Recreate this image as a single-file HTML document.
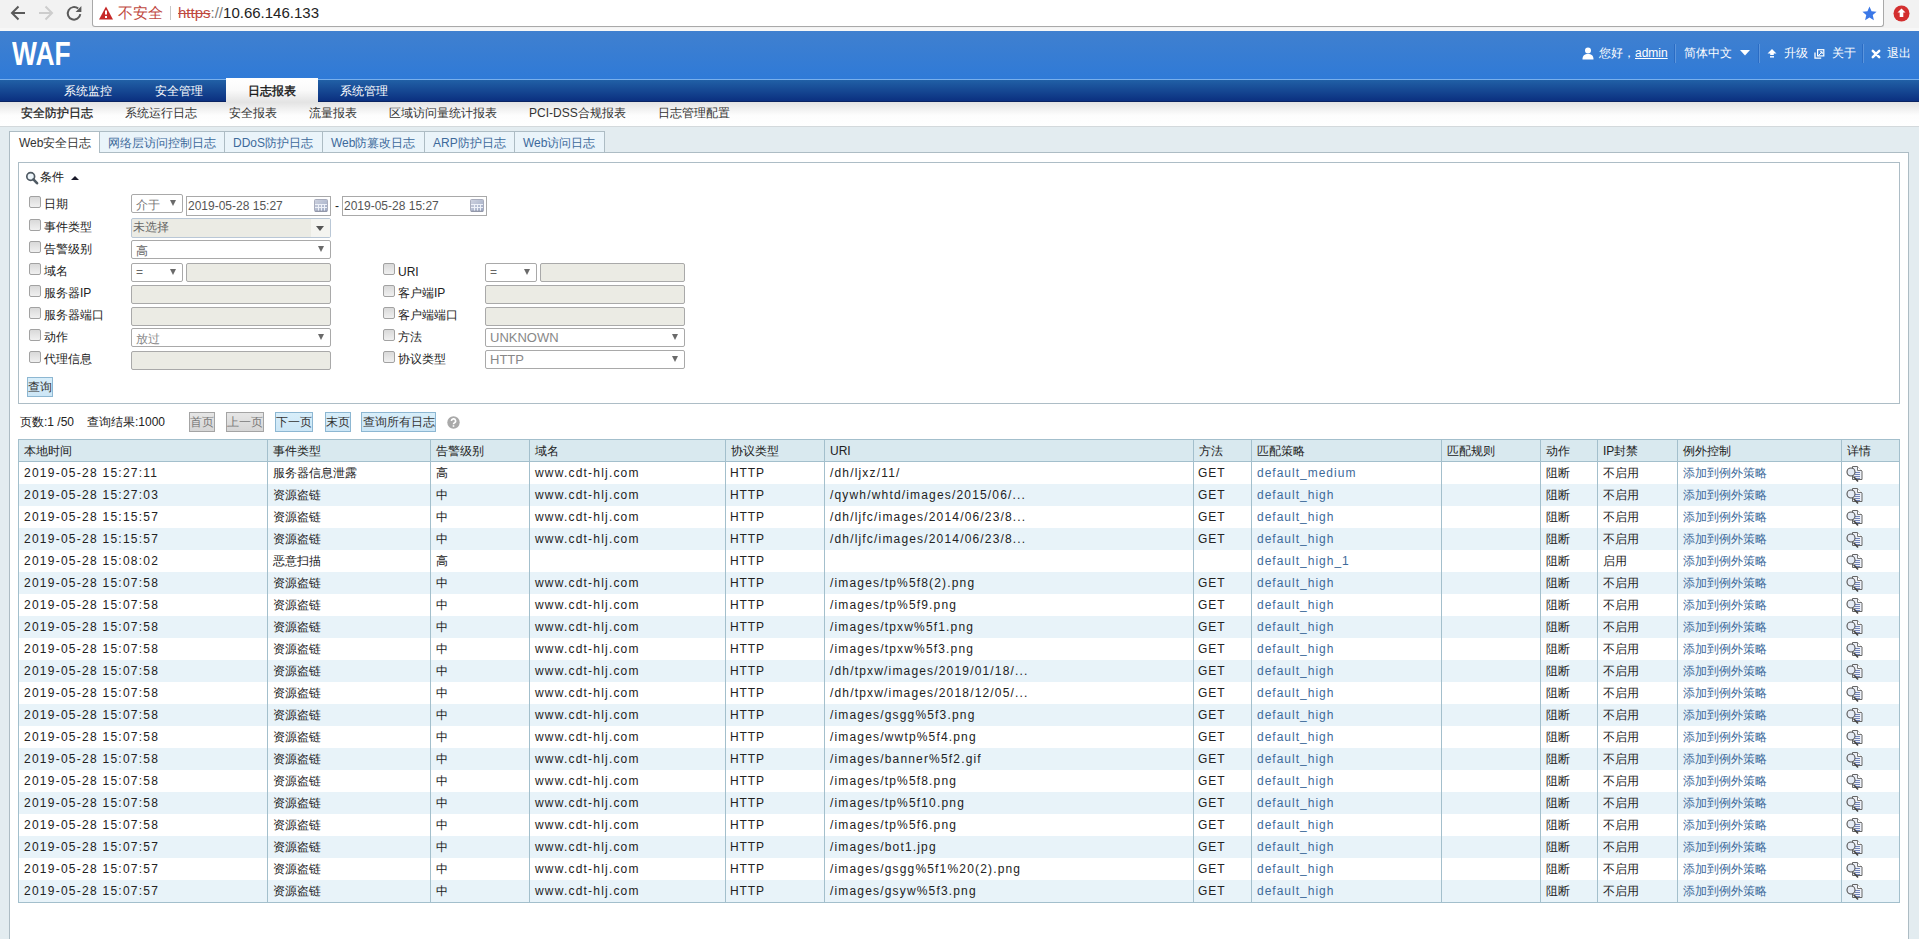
<!DOCTYPE html>
<html><head><meta charset="utf-8"><style>
*{box-sizing:border-box;margin:0;padding:0}
html,body{width:1919px;height:939px;overflow:hidden;background:#e3ecf0;font-family:"Liberation Sans",sans-serif;font-size:12px;color:#222}
.a{position:absolute;white-space:nowrap}
#chrome{position:absolute;left:0;top:0;width:1919px;height:31px;background:#f2f2f2}
#cl{position:absolute;left:0;top:28px;width:1919px;height:3px;background:#f7f7f7}
#addr{position:absolute;left:92px;top:-2px;width:1792px;height:29px;background:#fff;border:1px solid #a9a9a9;border-top:none;border-radius:0 0 3px 3px}
#hdr{position:absolute;left:0;top:31px;width:1919px;height:48px;background:linear-gradient(#4080cf,#2f7ad7)}
#hline{position:absolute;left:0;top:79px;width:1919px;height:1px;background:#79b0ec}
#nav{position:absolute;left:0;top:80px;width:1919px;height:22px;background:linear-gradient(#2160a6,#0b3080);border-bottom:1px solid #0a2462}
#sub{position:absolute;left:0;top:102px;width:1919px;height:25px;background:linear-gradient(#e3e3e3,#fdfdfd 55%,#fff);border-bottom:1px solid #d3d9dc}
.nv{position:absolute;top:83px;color:#fff;font-size:12px;line-height:17px}
.sv{position:absolute;top:105px;color:#333;font-size:12px;line-height:17px}
#act{position:absolute;left:226px;top:78px;width:92px;height:24px;background:linear-gradient(#fff,#fafafa 50%,#e4e4e4)}
#panel{position:absolute;left:9px;top:152px;width:1900px;height:800px;background:#fff;border:1px solid #adbcc4}
.tab{position:absolute;top:131px;height:22px;background:#eaf4fa;border:1px solid #adbcc4;border-right:none;color:#3d6a9a;line-height:22px}
.tab.on{background:#fff;color:#333;border-bottom-color:#fff;height:22px}

#cond{position:absolute;left:18px;top:162px;width:1882px;height:242px;border:1px solid #adbdc6;background:#fff}
.cb{position:absolute;width:12px;height:12px;border:1px solid #a2a2a2;border-radius:2px;background:linear-gradient(#d9d9d9,#f0f0f0)}
.lb{position:absolute;color:#222;line-height:16px;white-space:nowrap}
.sel{position:absolute;height:19px;border:1px solid #a9a9a9;background:#fff;color:#777;line-height:17px;padding-left:4px;border-radius:2px;white-space:nowrap}
.inp{position:absolute;height:19px;border:1px solid #a9a9a9;background:#ebebe4;border-radius:2px}
.arr{position:absolute;width:0;height:0;border-left:4px solid transparent;border-right:4px solid transparent;border-top:7px solid #444}
.sel span{color:inherit}
.btn{position:absolute;height:20px;border:1px solid #8db7d2;background:linear-gradient(#d8eefa,#cce6f6);color:#333;line-height:18px;text-align:center;white-space:nowrap}
.btn.g{border-color:#a4a4a4;background:linear-gradient(#e6e6e6,#d6d6d6);color:#7a7a7a}

#tbl{position:absolute;left:18px;top:439px;width:1882px;height:464px;border:1px solid #a3bfcc;background:#fff;overflow:hidden}
.th{position:absolute;left:0;top:0;width:1880px;height:22px;background:#d9e9ef;border-bottom:1px solid #a3bfcc}
.row{position:absolute;left:0;width:1880px;height:22px}
.row.o{background:#e8f3f9}
.vl{position:absolute;top:0;width:1px;height:464px;background:#a3bfcc}
.c{position:absolute;line-height:16px;white-space:nowrap;color:#222}
.v{letter-spacing:0.92px}
.lk{color:#3d6a9a}
</style></head><body>
<div id="chrome"></div><div id="cl"></div><div id="addr"></div>
<svg class="a" style="left:8px;top:3px" width="20" height="20" viewBox="0 0 20 20"><path d="M17 10H4.5M10.5 3.5L4 10l6.5 6.5" stroke="#5a5a5a" stroke-width="2" fill="none"/></svg>
<svg class="a" style="left:36px;top:3px" width="20" height="20" viewBox="0 0 20 20"><path d="M3 10h12.5M9.5 3.5L16 10l-6.5 6.5" stroke="#cdcdcd" stroke-width="2" fill="none"/></svg>
<svg class="a" style="left:65px;top:4px" width="20" height="20" viewBox="0 0 20 20"><path d="M15.3 10.2A6.3 6.3 0 1 1 13.2 4.6" stroke="#5a5a5a" stroke-width="2" fill="none"/><path d="M10.6 7.9H16.4V2.1Z" fill="#5a5a5a"/></svg>
<svg class="a" style="left:98px;top:5px" width="16" height="16" viewBox="0 0 16 16"><path d="M8 1.5L15 14.5H1z" fill="#c62828"/><rect x="7" y="5.5" width="2" height="4" fill="#fff"/><rect x="7" y="11" width="2" height="2" fill="#fff"/></svg>
<div class="a" style="left:118px;top:4px;font-size:15px;line-height:18px;color:#c0493f">不安全</div>
<div class="a" style="left:170px;top:6px;width:1px;height:14px;background:#c8c8c8"></div>
<div class="a" style="left:178px;top:3px;font-size:15px;line-height:19px;color:#222"><span style="color:#c0493f;text-decoration:line-through">https</span><span style="color:#777">://</span>10.66.146.133</div>
<svg class="a" style="left:1861px;top:5px" width="17" height="17" viewBox="0 0 24 24"><path d="M12 2l2.9 6.9 7.1.6-5.4 4.7 1.6 7.3L12 17.6 5.8 21.5l1.6-7.3L2 9.5l7.1-.6z" fill="#3b78e7"/></svg>
<svg class="a" style="left:1893px;top:5px" width="17" height="17" viewBox="0 0 17 17"><circle cx="8.5" cy="8.5" r="8" fill="#d32f2f"/><path d="M8.5 3.5l4 4h-2.2v4.5H6.7V7.5H4.5z" fill="#fff"/></svg>
<div id="hdr"></div><div id="hline"></div><div id="nav"></div><div id="sub"></div>
<div class="a" style="left:12px;top:36px;font-size:33px;line-height:36px;font-weight:bold;color:#fff;transform:scaleX(0.80);transform-origin:0 0">WAF</div>
<div id="act"></div>
<div class="nv" style="left:64px">系统监控</div>
<div class="nv" style="left:155px">安全管理</div>
<div class="nv" style="left:340px">系统管理</div>
<div class="nv" style="left:248px;color:#111;font-weight:500;-webkit-text-stroke:0.35px #111">日志报表</div>
<div class="sv" style="left:21px;font-weight:500;color:#1a1a1a;-webkit-text-stroke:0.25px #1a1a1a">安全防护日志</div>
<div class="sv" style="left:125px;">系统运行日志</div>
<div class="sv" style="left:229px;">安全报表</div>
<div class="sv" style="left:309px;">流量报表</div>
<div class="sv" style="left:389px;">区域访问量统计报表</div>
<div class="sv" style="left:529px;">PCI-DSS合规报表</div>
<div class="sv" style="left:658px;">日志管理配置</div>
<svg class="a" style="left:1582px;top:47px" width="12" height="13" viewBox="0 0 12 13"><circle cx="6" cy="3.5" r="3" fill="#fff"/><path d="M0.5 12.5c0-4 2-5.5 5.5-5.5s5.5 1.5 5.5 5.5z" fill="#fff"/></svg>
<div class="a" style="left:1599px;top:45px;color:#fff;line-height:17px">您好，<span style="text-decoration:underline">admin</span></div>
<div class="a" style="left:1674px;top:44px;width:1px;height:19px;background:#2a6cc4;box-shadow:1px 0 0 #5c95dc"></div>
<div class="a" style="left:1684px;top:45px;color:#fff;line-height:17px">简体中文</div>
<svg class="a" style="left:1740px;top:50px" width="10" height="6" viewBox="0 0 10 6"><path d="M0 0h10L5 5.5z" fill="#fff"/></svg>
<div class="a" style="left:1758px;top:44px;width:1px;height:19px;background:#2a6cc4;box-shadow:1px 0 0 #5c95dc"></div>
<svg class="a" style="left:1767px;top:49px" width="10" height="9" viewBox="0 0 10 9"><path d="M5 0L9.5 4.6H6.8V6H3.2V4.6H0.5z" fill="#fff"/><rect x="3" y="7" width="4" height="1.6" fill="#e8f0ff"/></svg>
<div class="a" style="left:1784px;top:45px;color:#fff;line-height:17px">升级</div>
<svg class="a" style="left:1814px;top:49px" width="11" height="10" viewBox="0 0 11 10"><path d="M1 3.5V9.2H7.2" stroke="#fff" stroke-width="1.3" fill="none"/><rect x="3.6" y="0.7" width="6.2" height="6.2" fill="none" stroke="#fff" stroke-width="1.2"/><path d="M4.5 6.5L8 3M6 2.8H8.2V5" stroke="#fff" stroke-width="1" fill="none"/></svg>
<div class="a" style="left:1832px;top:45px;color:#fff;line-height:17px">关于</div>
<div class="a" style="left:1862px;top:44px;width:1px;height:19px;background:#2a6cc4;box-shadow:1px 0 0 #5c95dc"></div>
<svg class="a" style="left:1871px;top:49px" width="10" height="10" viewBox="0 0 10 10"><path d="M1.8 1.8l6.4 6.4M8.2 1.8L1.8 8.2" stroke="#fff" stroke-width="2.5" stroke-linecap="round"/></svg>
<div class="a" style="left:1887px;top:45px;color:#fff;line-height:17px">退出</div>
<div id="panel"></div>
<div class="tab on" style="left:9px;width:91px;padding-left:9px">Web安全日志</div>
<div class="tab" style="left:99px;width:126px;padding-left:8px">网络层访问控制日志</div>
<div class="tab" style="left:224px;width:99px;padding-left:8px">DDoS防护日志</div>
<div class="tab" style="left:322px;width:103px;padding-left:8px">Web防篡改日志</div>
<div class="tab" style="left:424px;width:91px;padding-left:8px">ARP防护日志</div>
<div class="tab" style="left:514px;width:91px;border-right:1px solid #adbcc4;padding-left:8px">Web访问日志</div>
<div id="cond"></div>
<svg class="a" style="left:25px;top:171px" width="14" height="14" viewBox="0 0 14 14"><circle cx="5.7" cy="5.5" r="3.9" stroke="#4f5a63" stroke-width="1.7" fill="#eef6fb"/><path d="M8.4 8.4l3.6 3.8" stroke="#4f5a63" stroke-width="2.6" stroke-linecap="round"/></svg>
<div class="lb" style="left:40px;top:169px">条件</div>
<div class="arr" style="left:71px;top:176px;border-top:none;border-bottom:4px solid #1a1a2a;border-left-width:4px;border-right-width:4px"></div>
<div class="cb" style="left:29px;top:196px"></div>
<div class="lb" style="left:44px;top:196px">日期</div>
<div class="sel" style="left:131px;top:194px;width:52px;height:19px;color:#777"><span style="position:relative;top:2px">介于</span></div>
<div class="arr" style="left:170px;top:200px;border-top-color:#6a6a6a;border-top-width:6px;border-left-width:3.5px;border-right-width:3.5px"></div>
<div class="sel" style="left:186px;top:196px;width:145px;height:20px;color:#555;border-radius:0;padding-left:1px;line-height:18px">2019-05-28 15:27</div>
<svg class="a" style="left:314px;top:199px" width="14" height="13" viewBox="0 0 14 13"><defs><linearGradient id="cg186" x1="0" y1="0" x2="1" y2="1"><stop offset="0" stop-color="#cfd3e0"/><stop offset="1" stop-color="#9eaac4"/></linearGradient></defs><rect x="0.5" y="0.5" width="13" height="12" rx="1" fill="url(#cg186)" stroke="#a9adbd"/><path d="M1 5.5h12M1 8.5h12M4.5 5v7M7.5 5v7M10.5 5v7" stroke="#eef1f8" stroke-width="1"/><path d="M1 12.2h12" stroke="#8a8fa0"/></svg>
<div class="sel" style="left:342px;top:196px;width:145px;height:20px;color:#555;border-radius:0;padding-left:1px;line-height:18px">2019-05-28 15:27</div>
<svg class="a" style="left:470px;top:199px" width="14" height="13" viewBox="0 0 14 13"><defs><linearGradient id="cg342" x1="0" y1="0" x2="1" y2="1"><stop offset="0" stop-color="#cfd3e0"/><stop offset="1" stop-color="#9eaac4"/></linearGradient></defs><rect x="0.5" y="0.5" width="13" height="12" rx="1" fill="url(#cg342)" stroke="#a9adbd"/><path d="M1 5.5h12M1 8.5h12M4.5 5v7M7.5 5v7M10.5 5v7" stroke="#eef1f8" stroke-width="1"/><path d="M1 12.2h12" stroke="#8a8fa0"/></svg>
<div class="lb" style="left:335px;top:198px">-</div>
<div class="cb" style="left:29px;top:219px"></div>
<div class="lb" style="left:44px;top:219px">事件类型</div>
<div class="sel" style="left:131px;top:218px;width:200px;height:20px;background:#ebebe4;border-color:#b9c7d6;color:#666;padding-left:1px">未选择</div>
<div class="a" style="left:311px;top:219px;width:19px;height:18px;background:#f4f4f0"></div>
<div class="arr" style="left:316px;top:226px;border-top:5px solid #555;border-left-width:4px;border-right-width:4px"></div>
<div class="cb" style="left:29px;top:241px"></div>
<div class="lb" style="left:44px;top:241px">告警级别</div>
<div class="sel" style="left:131px;top:240px;width:200px;height:19px;color:#666"><span style="position:relative;top:2px">高</span></div>
<div class="arr" style="left:318px;top:246px;border-top-color:#6a6a6a;border-top-width:6px;border-left-width:3.5px;border-right-width:3.5px"></div>
<div class="cb" style="left:29px;top:263px"></div>
<div class="lb" style="left:44px;top:263px">域名</div>
<div class="sel" style="left:131px;top:263px;width:52px;height:19px;color:#666">=</div>
<div class="arr" style="left:170px;top:269px;border-top-color:#6a6a6a;border-top-width:6px;border-left-width:3.5px;border-right-width:3.5px"></div>
<div class="inp" style="left:186px;top:263px;width:145px;height:19px"></div>
<div class="cb" style="left:29px;top:285px"></div>
<div class="lb" style="left:44px;top:285px">服务器IP</div>
<div class="inp" style="left:131px;top:285px;width:200px;height:19px"></div>
<div class="cb" style="left:29px;top:307px"></div>
<div class="lb" style="left:44px;top:307px">服务器端口</div>
<div class="inp" style="left:131px;top:307px;width:200px;height:19px"></div>
<div class="cb" style="left:29px;top:329px"></div>
<div class="lb" style="left:44px;top:329px">动作</div>
<div class="sel" style="left:131px;top:328px;width:200px;height:19px;color:#888"><span style="position:relative;top:2px">放过</span></div>
<div class="arr" style="left:318px;top:334px;border-top-color:#6a6a6a;border-top-width:6px;border-left-width:3.5px;border-right-width:3.5px"></div>
<div class="cb" style="left:29px;top:351px"></div>
<div class="lb" style="left:44px;top:351px">代理信息</div>
<div class="inp" style="left:131px;top:351px;width:200px;height:19px"></div>
<div class="cb" style="left:383px;top:263px"></div>
<div class="lb" style="left:398px;top:264px">URI</div>
<div class="sel" style="left:485px;top:263px;width:52px;height:19px;color:#666">=</div>
<div class="arr" style="left:524px;top:269px;border-top-color:#6a6a6a;border-top-width:6px;border-left-width:3.5px;border-right-width:3.5px"></div>
<div class="inp" style="left:540px;top:263px;width:145px;height:19px"></div>
<div class="cb" style="left:383px;top:285px"></div>
<div class="lb" style="left:398px;top:285px">客户端IP</div>
<div class="inp" style="left:485px;top:285px;width:200px;height:19px"></div>
<div class="cb" style="left:383px;top:307px"></div>
<div class="lb" style="left:398px;top:307px">客户端端口</div>
<div class="inp" style="left:485px;top:307px;width:200px;height:19px"></div>
<div class="cb" style="left:383px;top:329px"></div>
<div class="lb" style="left:398px;top:329px">方法</div>
<div class="sel" style="left:485px;top:328px;width:200px;height:19px;color:#888"><span style="font-size:13px">UNKNOWN</span></div>
<div class="arr" style="left:672px;top:334px;border-top-color:#6a6a6a;border-top-width:6px;border-left-width:3.5px;border-right-width:3.5px"></div>
<div class="cb" style="left:383px;top:351px"></div>
<div class="lb" style="left:398px;top:351px">协议类型</div>
<div class="sel" style="left:485px;top:350px;width:200px;height:19px;color:#888"><span style="font-size:13px">HTTP</span></div>
<div class="arr" style="left:672px;top:356px;border-top-color:#6a6a6a;border-top-width:6px;border-left-width:3.5px;border-right-width:3.5px"></div>
<div class="btn" style="left:27px;top:377px;width:26px;height:20px;line-height:18px">查询</div>
<div class="lb" style="left:20px;top:414px">页数:1 /50</div>
<div class="lb" style="left:87px;top:414px">查询结果:1000</div>
<div class="btn g" style="left:189px;top:412px;width:26px">首页</div>
<div class="btn g" style="left:226px;top:412px;width:38px">上一页</div>
<div class="btn" style="left:275px;top:412px;width:38px">下一页</div>
<div class="btn" style="left:325px;top:412px;width:26px">末页</div>
<div class="btn" style="left:361px;top:412px;width:75px">查询所有日志</div>
<svg class="a" style="left:447px;top:416px" width="13" height="13" viewBox="0 0 13 13"><circle cx="6.5" cy="6.5" r="6.2" fill="#a9a9a9"/><path d="M4.4 5a2.1 2.1 0 1 1 2.9 1.9c-.6.3-.8.6-.8 1.3" stroke="#fff" stroke-width="1.6" fill="none"/><rect x="5.7" y="9.2" width="1.6" height="1.6" fill="#fff"/></svg>
<div id="tbl">
<div class="th"></div>
<div class="row" style="top:22px"></div>
<div class="row o" style="top:44px"></div>
<div class="row" style="top:66px"></div>
<div class="row o" style="top:88px"></div>
<div class="row" style="top:110px"></div>
<div class="row o" style="top:132px"></div>
<div class="row" style="top:154px"></div>
<div class="row o" style="top:176px"></div>
<div class="row" style="top:198px"></div>
<div class="row o" style="top:220px"></div>
<div class="row" style="top:242px"></div>
<div class="row o" style="top:264px"></div>
<div class="row" style="top:286px"></div>
<div class="row o" style="top:308px"></div>
<div class="row" style="top:330px"></div>
<div class="row o" style="top:352px"></div>
<div class="row" style="top:374px"></div>
<div class="row o" style="top:396px"></div>
<div class="row" style="top:418px"></div>
<div class="row o" style="top:440px"></div>
<div class="vl" style="left:248px"></div>
<div class="vl" style="left:411px"></div>
<div class="vl" style="left:510px"></div>
<div class="vl" style="left:706px"></div>
<div class="vl" style="left:805px"></div>
<div class="vl" style="left:1174px"></div>
<div class="vl" style="left:1232px"></div>
<div class="vl" style="left:1422px"></div>
<div class="vl" style="left:1521px"></div>
<div class="vl" style="left:1578px"></div>
<div class="vl" style="left:1658px"></div>
<div class="vl" style="left:1822px"></div>
<div class="c" style="left:5px;top:3px">本地时间</div>
<div class="c" style="left:254px;top:3px">事件类型</div>
<div class="c" style="left:417px;top:3px">告警级别</div>
<div class="c" style="left:516px;top:3px">域名</div>
<div class="c" style="left:712px;top:3px">协议类型</div>
<div class="c" style="left:811px;top:3px">URI</div>
<div class="c" style="left:1180px;top:3px">方法</div>
<div class="c" style="left:1238px;top:3px">匹配策略</div>
<div class="c" style="left:1428px;top:3px">匹配规则</div>
<div class="c" style="left:1527px;top:3px">动作</div>
<div class="c" style="left:1584px;top:3px">IP封禁</div>
<div class="c" style="left:1664px;top:3px">例外控制</div>
<div class="c" style="left:1828px;top:3px">详情</div>
<div class="c" style="letter-spacing:1.25px;left:5px;top:25px">2019-05-28 15:27:11</div>
<div class="c" style="left:254px;top:25px">服务器信息泄露</div>
<div class="c" style="left:417px;top:25px">高</div>
<div class="c" style="letter-spacing:1.2px;left:516px;top:25px">www.cdt-hlj.com</div>
<div class="c" style="letter-spacing:0.92px;left:711px;top:25px">HTTP</div>
<div class="c" style="letter-spacing:1.17px;left:811px;top:25px">/dh/ljxz/11/</div>
<div class="c" style="letter-spacing:0.92px;left:1179px;top:25px">GET</div>
<div class="c lk" style="letter-spacing:1.0px;left:1238px;top:25px">default_medium</div>
<div class="c" style="left:1527px;top:25px">阻断</div>
<div class="c" style="left:1584px;top:25px">不启用</div>
<div class="c lk" style="left:1664px;top:25px">添加到例外策略</div>
<svg class="a" style="left:1827px;top:26px" width="17" height="17" viewBox="0 0 17 17"><path d="M6.5 0.5H11.5L16 5V13.5H6.5Z" fill="#eef1f8" stroke="#666"/><path d="M11.5 0.5V4.5H16" fill="#fff" stroke="#777"/><path d="M9 6.5h5M9 8.5h5M9 10.5h5M9 12.5h5" stroke="#7083b8"/><circle cx="5" cy="6" r="4" fill="#e6ecf5" stroke="#555" stroke-width="1.1"/><path d="M7.5 10.5L12 15.5" stroke="#444" stroke-width="1.6"/></svg>
<div class="c" style="letter-spacing:1.25px;left:5px;top:47px">2019-05-28 15:27:03</div>
<div class="c" style="left:254px;top:47px">资源盗链</div>
<div class="c" style="left:417px;top:47px">中</div>
<div class="c" style="letter-spacing:1.2px;left:516px;top:47px">www.cdt-hlj.com</div>
<div class="c" style="letter-spacing:0.92px;left:711px;top:47px">HTTP</div>
<div class="c" style="letter-spacing:1.17px;left:811px;top:47px">/qywh/whtd/images/2015/06/...</div>
<div class="c" style="letter-spacing:0.92px;left:1179px;top:47px">GET</div>
<div class="c lk" style="letter-spacing:1.0px;left:1238px;top:47px">default_high</div>
<div class="c" style="left:1527px;top:47px">阻断</div>
<div class="c" style="left:1584px;top:47px">不启用</div>
<div class="c lk" style="left:1664px;top:47px">添加到例外策略</div>
<svg class="a" style="left:1827px;top:48px" width="17" height="17" viewBox="0 0 17 17"><path d="M6.5 0.5H11.5L16 5V13.5H6.5Z" fill="#eef1f8" stroke="#666"/><path d="M11.5 0.5V4.5H16" fill="#fff" stroke="#777"/><path d="M9 6.5h5M9 8.5h5M9 10.5h5M9 12.5h5" stroke="#7083b8"/><circle cx="5" cy="6" r="4" fill="#e6ecf5" stroke="#555" stroke-width="1.1"/><path d="M7.5 10.5L12 15.5" stroke="#444" stroke-width="1.6"/></svg>
<div class="c" style="letter-spacing:1.25px;left:5px;top:69px">2019-05-28 15:15:57</div>
<div class="c" style="left:254px;top:69px">资源盗链</div>
<div class="c" style="left:417px;top:69px">中</div>
<div class="c" style="letter-spacing:1.2px;left:516px;top:69px">www.cdt-hlj.com</div>
<div class="c" style="letter-spacing:0.92px;left:711px;top:69px">HTTP</div>
<div class="c" style="letter-spacing:1.17px;left:811px;top:69px">/dh/ljfc/images/2014/06/23/8...</div>
<div class="c" style="letter-spacing:0.92px;left:1179px;top:69px">GET</div>
<div class="c lk" style="letter-spacing:1.0px;left:1238px;top:69px">default_high</div>
<div class="c" style="left:1527px;top:69px">阻断</div>
<div class="c" style="left:1584px;top:69px">不启用</div>
<div class="c lk" style="left:1664px;top:69px">添加到例外策略</div>
<svg class="a" style="left:1827px;top:70px" width="17" height="17" viewBox="0 0 17 17"><path d="M6.5 0.5H11.5L16 5V13.5H6.5Z" fill="#eef1f8" stroke="#666"/><path d="M11.5 0.5V4.5H16" fill="#fff" stroke="#777"/><path d="M9 6.5h5M9 8.5h5M9 10.5h5M9 12.5h5" stroke="#7083b8"/><circle cx="5" cy="6" r="4" fill="#e6ecf5" stroke="#555" stroke-width="1.1"/><path d="M7.5 10.5L12 15.5" stroke="#444" stroke-width="1.6"/></svg>
<div class="c" style="letter-spacing:1.25px;left:5px;top:91px">2019-05-28 15:15:57</div>
<div class="c" style="left:254px;top:91px">资源盗链</div>
<div class="c" style="left:417px;top:91px">中</div>
<div class="c" style="letter-spacing:1.2px;left:516px;top:91px">www.cdt-hlj.com</div>
<div class="c" style="letter-spacing:0.92px;left:711px;top:91px">HTTP</div>
<div class="c" style="letter-spacing:1.17px;left:811px;top:91px">/dh/ljfc/images/2014/06/23/8...</div>
<div class="c" style="letter-spacing:0.92px;left:1179px;top:91px">GET</div>
<div class="c lk" style="letter-spacing:1.0px;left:1238px;top:91px">default_high</div>
<div class="c" style="left:1527px;top:91px">阻断</div>
<div class="c" style="left:1584px;top:91px">不启用</div>
<div class="c lk" style="left:1664px;top:91px">添加到例外策略</div>
<svg class="a" style="left:1827px;top:92px" width="17" height="17" viewBox="0 0 17 17"><path d="M6.5 0.5H11.5L16 5V13.5H6.5Z" fill="#eef1f8" stroke="#666"/><path d="M11.5 0.5V4.5H16" fill="#fff" stroke="#777"/><path d="M9 6.5h5M9 8.5h5M9 10.5h5M9 12.5h5" stroke="#7083b8"/><circle cx="5" cy="6" r="4" fill="#e6ecf5" stroke="#555" stroke-width="1.1"/><path d="M7.5 10.5L12 15.5" stroke="#444" stroke-width="1.6"/></svg>
<div class="c" style="letter-spacing:1.25px;left:5px;top:113px">2019-05-28 15:08:02</div>
<div class="c" style="left:254px;top:113px">恶意扫描</div>
<div class="c" style="left:417px;top:113px">高</div>
<div class="c" style="letter-spacing:0.92px;left:711px;top:113px">HTTP</div>
<div class="c lk" style="letter-spacing:1.0px;left:1238px;top:113px">default_high_1</div>
<div class="c" style="left:1527px;top:113px">阻断</div>
<div class="c" style="left:1584px;top:113px">启用</div>
<div class="c lk" style="left:1664px;top:113px">添加到例外策略</div>
<svg class="a" style="left:1827px;top:114px" width="17" height="17" viewBox="0 0 17 17"><path d="M6.5 0.5H11.5L16 5V13.5H6.5Z" fill="#eef1f8" stroke="#666"/><path d="M11.5 0.5V4.5H16" fill="#fff" stroke="#777"/><path d="M9 6.5h5M9 8.5h5M9 10.5h5M9 12.5h5" stroke="#7083b8"/><circle cx="5" cy="6" r="4" fill="#e6ecf5" stroke="#555" stroke-width="1.1"/><path d="M7.5 10.5L12 15.5" stroke="#444" stroke-width="1.6"/></svg>
<div class="c" style="letter-spacing:1.25px;left:5px;top:135px">2019-05-28 15:07:58</div>
<div class="c" style="left:254px;top:135px">资源盗链</div>
<div class="c" style="left:417px;top:135px">中</div>
<div class="c" style="letter-spacing:1.2px;left:516px;top:135px">www.cdt-hlj.com</div>
<div class="c" style="letter-spacing:0.92px;left:711px;top:135px">HTTP</div>
<div class="c" style="letter-spacing:1.17px;left:811px;top:135px">/images/tp%5f8(2).png</div>
<div class="c" style="letter-spacing:0.92px;left:1179px;top:135px">GET</div>
<div class="c lk" style="letter-spacing:1.0px;left:1238px;top:135px">default_high</div>
<div class="c" style="left:1527px;top:135px">阻断</div>
<div class="c" style="left:1584px;top:135px">不启用</div>
<div class="c lk" style="left:1664px;top:135px">添加到例外策略</div>
<svg class="a" style="left:1827px;top:136px" width="17" height="17" viewBox="0 0 17 17"><path d="M6.5 0.5H11.5L16 5V13.5H6.5Z" fill="#eef1f8" stroke="#666"/><path d="M11.5 0.5V4.5H16" fill="#fff" stroke="#777"/><path d="M9 6.5h5M9 8.5h5M9 10.5h5M9 12.5h5" stroke="#7083b8"/><circle cx="5" cy="6" r="4" fill="#e6ecf5" stroke="#555" stroke-width="1.1"/><path d="M7.5 10.5L12 15.5" stroke="#444" stroke-width="1.6"/></svg>
<div class="c" style="letter-spacing:1.25px;left:5px;top:157px">2019-05-28 15:07:58</div>
<div class="c" style="left:254px;top:157px">资源盗链</div>
<div class="c" style="left:417px;top:157px">中</div>
<div class="c" style="letter-spacing:1.2px;left:516px;top:157px">www.cdt-hlj.com</div>
<div class="c" style="letter-spacing:0.92px;left:711px;top:157px">HTTP</div>
<div class="c" style="letter-spacing:1.17px;left:811px;top:157px">/images/tp%5f9.png</div>
<div class="c" style="letter-spacing:0.92px;left:1179px;top:157px">GET</div>
<div class="c lk" style="letter-spacing:1.0px;left:1238px;top:157px">default_high</div>
<div class="c" style="left:1527px;top:157px">阻断</div>
<div class="c" style="left:1584px;top:157px">不启用</div>
<div class="c lk" style="left:1664px;top:157px">添加到例外策略</div>
<svg class="a" style="left:1827px;top:158px" width="17" height="17" viewBox="0 0 17 17"><path d="M6.5 0.5H11.5L16 5V13.5H6.5Z" fill="#eef1f8" stroke="#666"/><path d="M11.5 0.5V4.5H16" fill="#fff" stroke="#777"/><path d="M9 6.5h5M9 8.5h5M9 10.5h5M9 12.5h5" stroke="#7083b8"/><circle cx="5" cy="6" r="4" fill="#e6ecf5" stroke="#555" stroke-width="1.1"/><path d="M7.5 10.5L12 15.5" stroke="#444" stroke-width="1.6"/></svg>
<div class="c" style="letter-spacing:1.25px;left:5px;top:179px">2019-05-28 15:07:58</div>
<div class="c" style="left:254px;top:179px">资源盗链</div>
<div class="c" style="left:417px;top:179px">中</div>
<div class="c" style="letter-spacing:1.2px;left:516px;top:179px">www.cdt-hlj.com</div>
<div class="c" style="letter-spacing:0.92px;left:711px;top:179px">HTTP</div>
<div class="c" style="letter-spacing:1.17px;left:811px;top:179px">/images/tpxw%5f1.png</div>
<div class="c" style="letter-spacing:0.92px;left:1179px;top:179px">GET</div>
<div class="c lk" style="letter-spacing:1.0px;left:1238px;top:179px">default_high</div>
<div class="c" style="left:1527px;top:179px">阻断</div>
<div class="c" style="left:1584px;top:179px">不启用</div>
<div class="c lk" style="left:1664px;top:179px">添加到例外策略</div>
<svg class="a" style="left:1827px;top:180px" width="17" height="17" viewBox="0 0 17 17"><path d="M6.5 0.5H11.5L16 5V13.5H6.5Z" fill="#eef1f8" stroke="#666"/><path d="M11.5 0.5V4.5H16" fill="#fff" stroke="#777"/><path d="M9 6.5h5M9 8.5h5M9 10.5h5M9 12.5h5" stroke="#7083b8"/><circle cx="5" cy="6" r="4" fill="#e6ecf5" stroke="#555" stroke-width="1.1"/><path d="M7.5 10.5L12 15.5" stroke="#444" stroke-width="1.6"/></svg>
<div class="c" style="letter-spacing:1.25px;left:5px;top:201px">2019-05-28 15:07:58</div>
<div class="c" style="left:254px;top:201px">资源盗链</div>
<div class="c" style="left:417px;top:201px">中</div>
<div class="c" style="letter-spacing:1.2px;left:516px;top:201px">www.cdt-hlj.com</div>
<div class="c" style="letter-spacing:0.92px;left:711px;top:201px">HTTP</div>
<div class="c" style="letter-spacing:1.17px;left:811px;top:201px">/images/tpxw%5f3.png</div>
<div class="c" style="letter-spacing:0.92px;left:1179px;top:201px">GET</div>
<div class="c lk" style="letter-spacing:1.0px;left:1238px;top:201px">default_high</div>
<div class="c" style="left:1527px;top:201px">阻断</div>
<div class="c" style="left:1584px;top:201px">不启用</div>
<div class="c lk" style="left:1664px;top:201px">添加到例外策略</div>
<svg class="a" style="left:1827px;top:202px" width="17" height="17" viewBox="0 0 17 17"><path d="M6.5 0.5H11.5L16 5V13.5H6.5Z" fill="#eef1f8" stroke="#666"/><path d="M11.5 0.5V4.5H16" fill="#fff" stroke="#777"/><path d="M9 6.5h5M9 8.5h5M9 10.5h5M9 12.5h5" stroke="#7083b8"/><circle cx="5" cy="6" r="4" fill="#e6ecf5" stroke="#555" stroke-width="1.1"/><path d="M7.5 10.5L12 15.5" stroke="#444" stroke-width="1.6"/></svg>
<div class="c" style="letter-spacing:1.25px;left:5px;top:223px">2019-05-28 15:07:58</div>
<div class="c" style="left:254px;top:223px">资源盗链</div>
<div class="c" style="left:417px;top:223px">中</div>
<div class="c" style="letter-spacing:1.2px;left:516px;top:223px">www.cdt-hlj.com</div>
<div class="c" style="letter-spacing:0.92px;left:711px;top:223px">HTTP</div>
<div class="c" style="letter-spacing:1.17px;left:811px;top:223px">/dh/tpxw/images/2019/01/18/...</div>
<div class="c" style="letter-spacing:0.92px;left:1179px;top:223px">GET</div>
<div class="c lk" style="letter-spacing:1.0px;left:1238px;top:223px">default_high</div>
<div class="c" style="left:1527px;top:223px">阻断</div>
<div class="c" style="left:1584px;top:223px">不启用</div>
<div class="c lk" style="left:1664px;top:223px">添加到例外策略</div>
<svg class="a" style="left:1827px;top:224px" width="17" height="17" viewBox="0 0 17 17"><path d="M6.5 0.5H11.5L16 5V13.5H6.5Z" fill="#eef1f8" stroke="#666"/><path d="M11.5 0.5V4.5H16" fill="#fff" stroke="#777"/><path d="M9 6.5h5M9 8.5h5M9 10.5h5M9 12.5h5" stroke="#7083b8"/><circle cx="5" cy="6" r="4" fill="#e6ecf5" stroke="#555" stroke-width="1.1"/><path d="M7.5 10.5L12 15.5" stroke="#444" stroke-width="1.6"/></svg>
<div class="c" style="letter-spacing:1.25px;left:5px;top:245px">2019-05-28 15:07:58</div>
<div class="c" style="left:254px;top:245px">资源盗链</div>
<div class="c" style="left:417px;top:245px">中</div>
<div class="c" style="letter-spacing:1.2px;left:516px;top:245px">www.cdt-hlj.com</div>
<div class="c" style="letter-spacing:0.92px;left:711px;top:245px">HTTP</div>
<div class="c" style="letter-spacing:1.17px;left:811px;top:245px">/dh/tpxw/images/2018/12/05/...</div>
<div class="c" style="letter-spacing:0.92px;left:1179px;top:245px">GET</div>
<div class="c lk" style="letter-spacing:1.0px;left:1238px;top:245px">default_high</div>
<div class="c" style="left:1527px;top:245px">阻断</div>
<div class="c" style="left:1584px;top:245px">不启用</div>
<div class="c lk" style="left:1664px;top:245px">添加到例外策略</div>
<svg class="a" style="left:1827px;top:246px" width="17" height="17" viewBox="0 0 17 17"><path d="M6.5 0.5H11.5L16 5V13.5H6.5Z" fill="#eef1f8" stroke="#666"/><path d="M11.5 0.5V4.5H16" fill="#fff" stroke="#777"/><path d="M9 6.5h5M9 8.5h5M9 10.5h5M9 12.5h5" stroke="#7083b8"/><circle cx="5" cy="6" r="4" fill="#e6ecf5" stroke="#555" stroke-width="1.1"/><path d="M7.5 10.5L12 15.5" stroke="#444" stroke-width="1.6"/></svg>
<div class="c" style="letter-spacing:1.25px;left:5px;top:267px">2019-05-28 15:07:58</div>
<div class="c" style="left:254px;top:267px">资源盗链</div>
<div class="c" style="left:417px;top:267px">中</div>
<div class="c" style="letter-spacing:1.2px;left:516px;top:267px">www.cdt-hlj.com</div>
<div class="c" style="letter-spacing:0.92px;left:711px;top:267px">HTTP</div>
<div class="c" style="letter-spacing:1.17px;left:811px;top:267px">/images/gsgg%5f3.png</div>
<div class="c" style="letter-spacing:0.92px;left:1179px;top:267px">GET</div>
<div class="c lk" style="letter-spacing:1.0px;left:1238px;top:267px">default_high</div>
<div class="c" style="left:1527px;top:267px">阻断</div>
<div class="c" style="left:1584px;top:267px">不启用</div>
<div class="c lk" style="left:1664px;top:267px">添加到例外策略</div>
<svg class="a" style="left:1827px;top:268px" width="17" height="17" viewBox="0 0 17 17"><path d="M6.5 0.5H11.5L16 5V13.5H6.5Z" fill="#eef1f8" stroke="#666"/><path d="M11.5 0.5V4.5H16" fill="#fff" stroke="#777"/><path d="M9 6.5h5M9 8.5h5M9 10.5h5M9 12.5h5" stroke="#7083b8"/><circle cx="5" cy="6" r="4" fill="#e6ecf5" stroke="#555" stroke-width="1.1"/><path d="M7.5 10.5L12 15.5" stroke="#444" stroke-width="1.6"/></svg>
<div class="c" style="letter-spacing:1.25px;left:5px;top:289px">2019-05-28 15:07:58</div>
<div class="c" style="left:254px;top:289px">资源盗链</div>
<div class="c" style="left:417px;top:289px">中</div>
<div class="c" style="letter-spacing:1.2px;left:516px;top:289px">www.cdt-hlj.com</div>
<div class="c" style="letter-spacing:0.92px;left:711px;top:289px">HTTP</div>
<div class="c" style="letter-spacing:1.17px;left:811px;top:289px">/images/wwtp%5f4.png</div>
<div class="c" style="letter-spacing:0.92px;left:1179px;top:289px">GET</div>
<div class="c lk" style="letter-spacing:1.0px;left:1238px;top:289px">default_high</div>
<div class="c" style="left:1527px;top:289px">阻断</div>
<div class="c" style="left:1584px;top:289px">不启用</div>
<div class="c lk" style="left:1664px;top:289px">添加到例外策略</div>
<svg class="a" style="left:1827px;top:290px" width="17" height="17" viewBox="0 0 17 17"><path d="M6.5 0.5H11.5L16 5V13.5H6.5Z" fill="#eef1f8" stroke="#666"/><path d="M11.5 0.5V4.5H16" fill="#fff" stroke="#777"/><path d="M9 6.5h5M9 8.5h5M9 10.5h5M9 12.5h5" stroke="#7083b8"/><circle cx="5" cy="6" r="4" fill="#e6ecf5" stroke="#555" stroke-width="1.1"/><path d="M7.5 10.5L12 15.5" stroke="#444" stroke-width="1.6"/></svg>
<div class="c" style="letter-spacing:1.25px;left:5px;top:311px">2019-05-28 15:07:58</div>
<div class="c" style="left:254px;top:311px">资源盗链</div>
<div class="c" style="left:417px;top:311px">中</div>
<div class="c" style="letter-spacing:1.2px;left:516px;top:311px">www.cdt-hlj.com</div>
<div class="c" style="letter-spacing:0.92px;left:711px;top:311px">HTTP</div>
<div class="c" style="letter-spacing:1.17px;left:811px;top:311px">/images/banner%5f2.gif</div>
<div class="c" style="letter-spacing:0.92px;left:1179px;top:311px">GET</div>
<div class="c lk" style="letter-spacing:1.0px;left:1238px;top:311px">default_high</div>
<div class="c" style="left:1527px;top:311px">阻断</div>
<div class="c" style="left:1584px;top:311px">不启用</div>
<div class="c lk" style="left:1664px;top:311px">添加到例外策略</div>
<svg class="a" style="left:1827px;top:312px" width="17" height="17" viewBox="0 0 17 17"><path d="M6.5 0.5H11.5L16 5V13.5H6.5Z" fill="#eef1f8" stroke="#666"/><path d="M11.5 0.5V4.5H16" fill="#fff" stroke="#777"/><path d="M9 6.5h5M9 8.5h5M9 10.5h5M9 12.5h5" stroke="#7083b8"/><circle cx="5" cy="6" r="4" fill="#e6ecf5" stroke="#555" stroke-width="1.1"/><path d="M7.5 10.5L12 15.5" stroke="#444" stroke-width="1.6"/></svg>
<div class="c" style="letter-spacing:1.25px;left:5px;top:333px">2019-05-28 15:07:58</div>
<div class="c" style="left:254px;top:333px">资源盗链</div>
<div class="c" style="left:417px;top:333px">中</div>
<div class="c" style="letter-spacing:1.2px;left:516px;top:333px">www.cdt-hlj.com</div>
<div class="c" style="letter-spacing:0.92px;left:711px;top:333px">HTTP</div>
<div class="c" style="letter-spacing:1.17px;left:811px;top:333px">/images/tp%5f8.png</div>
<div class="c" style="letter-spacing:0.92px;left:1179px;top:333px">GET</div>
<div class="c lk" style="letter-spacing:1.0px;left:1238px;top:333px">default_high</div>
<div class="c" style="left:1527px;top:333px">阻断</div>
<div class="c" style="left:1584px;top:333px">不启用</div>
<div class="c lk" style="left:1664px;top:333px">添加到例外策略</div>
<svg class="a" style="left:1827px;top:334px" width="17" height="17" viewBox="0 0 17 17"><path d="M6.5 0.5H11.5L16 5V13.5H6.5Z" fill="#eef1f8" stroke="#666"/><path d="M11.5 0.5V4.5H16" fill="#fff" stroke="#777"/><path d="M9 6.5h5M9 8.5h5M9 10.5h5M9 12.5h5" stroke="#7083b8"/><circle cx="5" cy="6" r="4" fill="#e6ecf5" stroke="#555" stroke-width="1.1"/><path d="M7.5 10.5L12 15.5" stroke="#444" stroke-width="1.6"/></svg>
<div class="c" style="letter-spacing:1.25px;left:5px;top:355px">2019-05-28 15:07:58</div>
<div class="c" style="left:254px;top:355px">资源盗链</div>
<div class="c" style="left:417px;top:355px">中</div>
<div class="c" style="letter-spacing:1.2px;left:516px;top:355px">www.cdt-hlj.com</div>
<div class="c" style="letter-spacing:0.92px;left:711px;top:355px">HTTP</div>
<div class="c" style="letter-spacing:1.17px;left:811px;top:355px">/images/tp%5f10.png</div>
<div class="c" style="letter-spacing:0.92px;left:1179px;top:355px">GET</div>
<div class="c lk" style="letter-spacing:1.0px;left:1238px;top:355px">default_high</div>
<div class="c" style="left:1527px;top:355px">阻断</div>
<div class="c" style="left:1584px;top:355px">不启用</div>
<div class="c lk" style="left:1664px;top:355px">添加到例外策略</div>
<svg class="a" style="left:1827px;top:356px" width="17" height="17" viewBox="0 0 17 17"><path d="M6.5 0.5H11.5L16 5V13.5H6.5Z" fill="#eef1f8" stroke="#666"/><path d="M11.5 0.5V4.5H16" fill="#fff" stroke="#777"/><path d="M9 6.5h5M9 8.5h5M9 10.5h5M9 12.5h5" stroke="#7083b8"/><circle cx="5" cy="6" r="4" fill="#e6ecf5" stroke="#555" stroke-width="1.1"/><path d="M7.5 10.5L12 15.5" stroke="#444" stroke-width="1.6"/></svg>
<div class="c" style="letter-spacing:1.25px;left:5px;top:377px">2019-05-28 15:07:58</div>
<div class="c" style="left:254px;top:377px">资源盗链</div>
<div class="c" style="left:417px;top:377px">中</div>
<div class="c" style="letter-spacing:1.2px;left:516px;top:377px">www.cdt-hlj.com</div>
<div class="c" style="letter-spacing:0.92px;left:711px;top:377px">HTTP</div>
<div class="c" style="letter-spacing:1.17px;left:811px;top:377px">/images/tp%5f6.png</div>
<div class="c" style="letter-spacing:0.92px;left:1179px;top:377px">GET</div>
<div class="c lk" style="letter-spacing:1.0px;left:1238px;top:377px">default_high</div>
<div class="c" style="left:1527px;top:377px">阻断</div>
<div class="c" style="left:1584px;top:377px">不启用</div>
<div class="c lk" style="left:1664px;top:377px">添加到例外策略</div>
<svg class="a" style="left:1827px;top:378px" width="17" height="17" viewBox="0 0 17 17"><path d="M6.5 0.5H11.5L16 5V13.5H6.5Z" fill="#eef1f8" stroke="#666"/><path d="M11.5 0.5V4.5H16" fill="#fff" stroke="#777"/><path d="M9 6.5h5M9 8.5h5M9 10.5h5M9 12.5h5" stroke="#7083b8"/><circle cx="5" cy="6" r="4" fill="#e6ecf5" stroke="#555" stroke-width="1.1"/><path d="M7.5 10.5L12 15.5" stroke="#444" stroke-width="1.6"/></svg>
<div class="c" style="letter-spacing:1.25px;left:5px;top:399px">2019-05-28 15:07:57</div>
<div class="c" style="left:254px;top:399px">资源盗链</div>
<div class="c" style="left:417px;top:399px">中</div>
<div class="c" style="letter-spacing:1.2px;left:516px;top:399px">www.cdt-hlj.com</div>
<div class="c" style="letter-spacing:0.92px;left:711px;top:399px">HTTP</div>
<div class="c" style="letter-spacing:1.17px;left:811px;top:399px">/images/bot1.jpg</div>
<div class="c" style="letter-spacing:0.92px;left:1179px;top:399px">GET</div>
<div class="c lk" style="letter-spacing:1.0px;left:1238px;top:399px">default_high</div>
<div class="c" style="left:1527px;top:399px">阻断</div>
<div class="c" style="left:1584px;top:399px">不启用</div>
<div class="c lk" style="left:1664px;top:399px">添加到例外策略</div>
<svg class="a" style="left:1827px;top:400px" width="17" height="17" viewBox="0 0 17 17"><path d="M6.5 0.5H11.5L16 5V13.5H6.5Z" fill="#eef1f8" stroke="#666"/><path d="M11.5 0.5V4.5H16" fill="#fff" stroke="#777"/><path d="M9 6.5h5M9 8.5h5M9 10.5h5M9 12.5h5" stroke="#7083b8"/><circle cx="5" cy="6" r="4" fill="#e6ecf5" stroke="#555" stroke-width="1.1"/><path d="M7.5 10.5L12 15.5" stroke="#444" stroke-width="1.6"/></svg>
<div class="c" style="letter-spacing:1.25px;left:5px;top:421px">2019-05-28 15:07:57</div>
<div class="c" style="left:254px;top:421px">资源盗链</div>
<div class="c" style="left:417px;top:421px">中</div>
<div class="c" style="letter-spacing:1.2px;left:516px;top:421px">www.cdt-hlj.com</div>
<div class="c" style="letter-spacing:0.92px;left:711px;top:421px">HTTP</div>
<div class="c" style="letter-spacing:1.17px;left:811px;top:421px">/images/gsgg%5f1%20(2).png</div>
<div class="c" style="letter-spacing:0.92px;left:1179px;top:421px">GET</div>
<div class="c lk" style="letter-spacing:1.0px;left:1238px;top:421px">default_high</div>
<div class="c" style="left:1527px;top:421px">阻断</div>
<div class="c" style="left:1584px;top:421px">不启用</div>
<div class="c lk" style="left:1664px;top:421px">添加到例外策略</div>
<svg class="a" style="left:1827px;top:422px" width="17" height="17" viewBox="0 0 17 17"><path d="M6.5 0.5H11.5L16 5V13.5H6.5Z" fill="#eef1f8" stroke="#666"/><path d="M11.5 0.5V4.5H16" fill="#fff" stroke="#777"/><path d="M9 6.5h5M9 8.5h5M9 10.5h5M9 12.5h5" stroke="#7083b8"/><circle cx="5" cy="6" r="4" fill="#e6ecf5" stroke="#555" stroke-width="1.1"/><path d="M7.5 10.5L12 15.5" stroke="#444" stroke-width="1.6"/></svg>
<div class="c" style="letter-spacing:1.25px;left:5px;top:443px">2019-05-28 15:07:57</div>
<div class="c" style="left:254px;top:443px">资源盗链</div>
<div class="c" style="left:417px;top:443px">中</div>
<div class="c" style="letter-spacing:1.2px;left:516px;top:443px">www.cdt-hlj.com</div>
<div class="c" style="letter-spacing:0.92px;left:711px;top:443px">HTTP</div>
<div class="c" style="letter-spacing:1.17px;left:811px;top:443px">/images/gsyw%5f3.png</div>
<div class="c" style="letter-spacing:0.92px;left:1179px;top:443px">GET</div>
<div class="c lk" style="letter-spacing:1.0px;left:1238px;top:443px">default_high</div>
<div class="c" style="left:1527px;top:443px">阻断</div>
<div class="c" style="left:1584px;top:443px">不启用</div>
<div class="c lk" style="left:1664px;top:443px">添加到例外策略</div>
<svg class="a" style="left:1827px;top:444px" width="17" height="17" viewBox="0 0 17 17"><path d="M6.5 0.5H11.5L16 5V13.5H6.5Z" fill="#eef1f8" stroke="#666"/><path d="M11.5 0.5V4.5H16" fill="#fff" stroke="#777"/><path d="M9 6.5h5M9 8.5h5M9 10.5h5M9 12.5h5" stroke="#7083b8"/><circle cx="5" cy="6" r="4" fill="#e6ecf5" stroke="#555" stroke-width="1.1"/><path d="M7.5 10.5L12 15.5" stroke="#444" stroke-width="1.6"/></svg>
</div>
<div class="a" style="left:9px;top:150px;width:1px;height:4px;background:#adbcc4"></div>
</body></html>
